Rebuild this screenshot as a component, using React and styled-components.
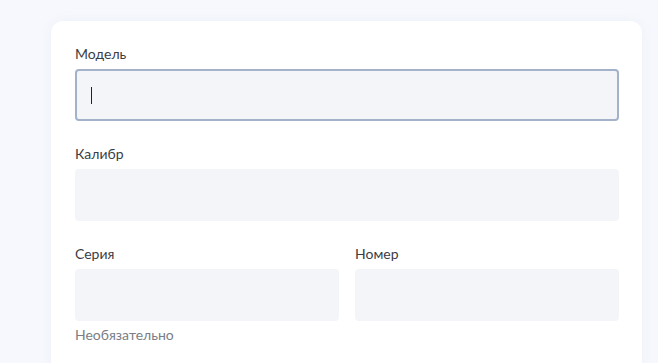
import styled, { createGlobalStyle } from "styled-components";

const Global = createGlobalStyle`
  html, body {
    margin: 0;
    padding: 0;
    background: #f6f8fd;
    font-family: Lato, "Noto Sans", sans-serif;
  }
`;

const Page = styled.div`
  padding: 21px 16px 0 51px;
  height: 363px;
  box-sizing: border-box;
  overflow: hidden;
`;

const Card = styled.div`
  background: #fff;
  border-radius: 12px;
  padding: 22px 23px 40px 24px;
  box-shadow: 0 0 12px rgba(180, 190, 215, 0.12);
  min-height: 400px;
  box-sizing: border-box;
`;

const Group = styled.div`
  display: flex;
  flex-direction: column;
  margin-bottom: 22px;
`;

const Row = styled.div`
  display: grid;
  grid-template-columns: 1fr 1fr;
  column-gap: 16px;
`;

const Label = styled.div`
  font-size: 14px;
  line-height: 20px;
  padding-top: 1px;
  color: #3a3d44;
  margin-bottom: 5px;
`;

const Input = styled.div`
  height: 52px;
  box-sizing: border-box;
  border-radius: 4px;
  background: #f4f5f9;
  border: 2px solid ${(p) => (p.$focused ? "#a3b2c9" : "#f4f5f9")};
  display: flex;
  align-items: center;
  padding-left: 14px;
`;

const Caret = styled.span`
  width: 1px;
  height: 17px;
  background: #222;
`;

const Hint = styled.div`
  font-size: 14px;
  line-height: 20px;
  color: #7a7d85;
  margin-top: 4px;
`;

export default function App() {
  return (
    <>
      <Global />
      <Page>
        <Card>
          <Group>
            <Label>Модель</Label>
            <Input $focused>
              <Caret />
            </Input>
          </Group>
          <Group>
            <Label>Калибр</Label>
            <Input />
          </Group>
          <Row>
            <div>
              <Label>Серия</Label>
              <Input />
              <Hint>Необязательно</Hint>
            </div>
            <div>
              <Label>Номер</Label>
              <Input />
            </div>
          </Row>
        </Card>
      </Page>
    </>
  );
}
